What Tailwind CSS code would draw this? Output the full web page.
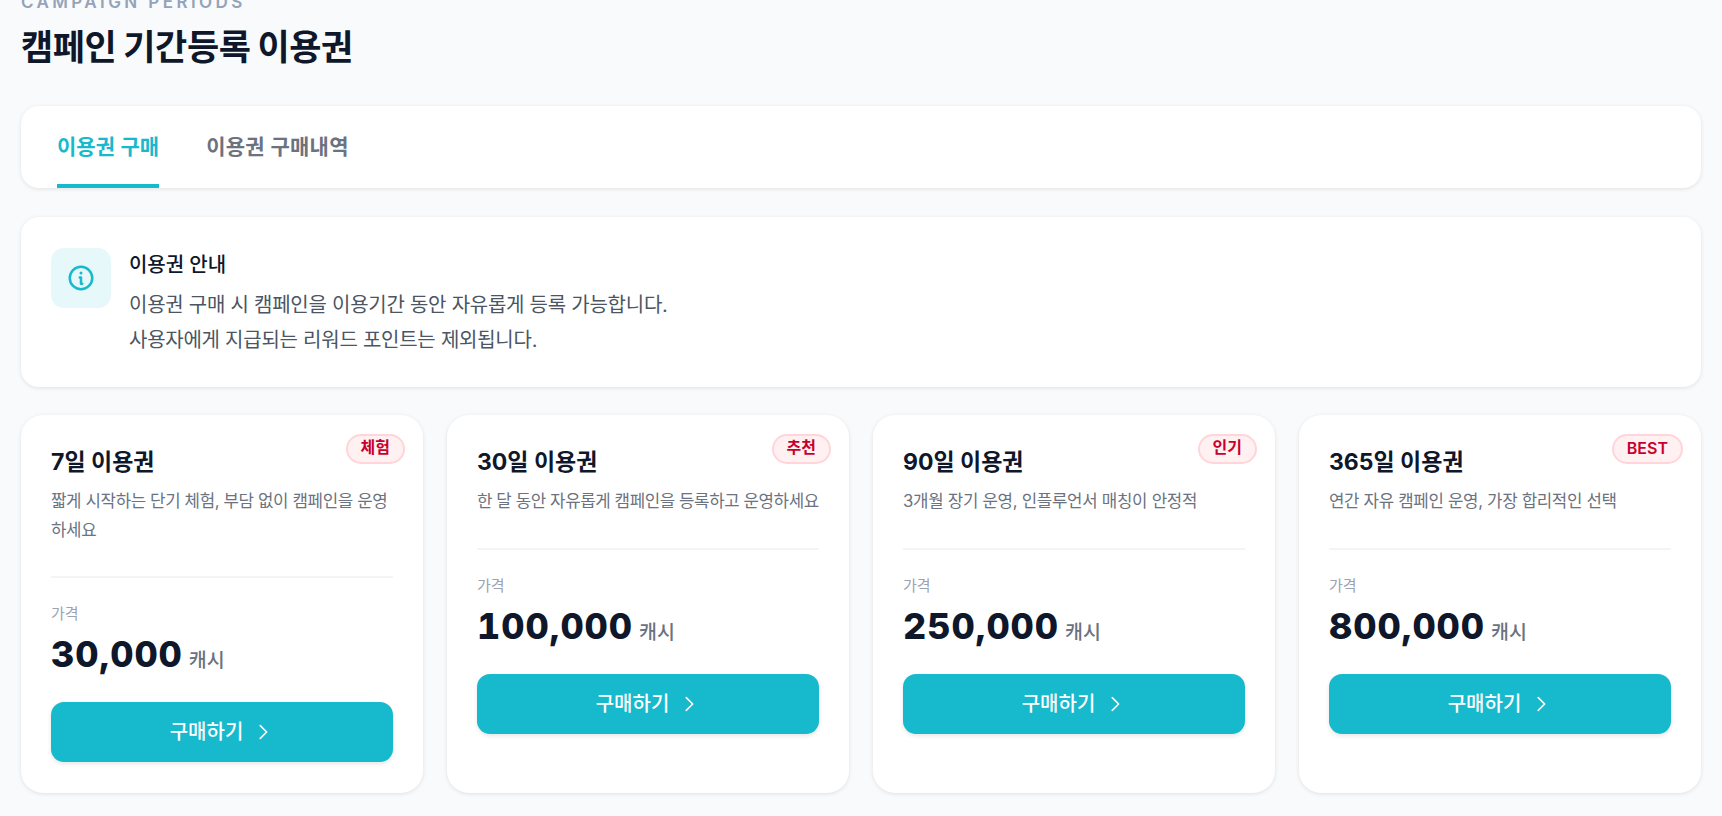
<!DOCTYPE html>
<html lang="ko">
<head>
<meta charset="utf-8">
<script src="https://cdn.jsdelivr.net/npm/@tailwindcss/browser@4"></script>
</head>
<body class="m-0 h-[816px] overflow-hidden bg-[#f9fafc] font-['Inter','Noto_Sans_CJK_KR',sans-serif] text-[#0f172a]">
<main class="flex flex-col px-[21px] -mt-[8px]">
  <header class="flex flex-col">
    <p class="text-[17px] leading-[20px] font-semibold tracking-[3.4px] text-[#94a3b8]">CAMPAIGN PERIODS</p>
    <h1 class="mt-[11px] text-[35px] leading-[48px] font-bold tracking-[-0.4px] [word-spacing:-1px] text-[#0f172a]">캠페인 기간등록 이용권</h1>
  </header>
  <nav class="mt-[35px] flex h-[82px] gap-[47px] rounded-[18px] bg-white px-[36px] shadow-[0_1px_4px_rgba(0,0,0,0.1)]">
    <a class="flex h-full items-center border-b-4 border-[#17b9cd] pt-[3px] text-[21px] font-semibold tracking-[0.05px] text-[#17b9cd]">이용권 구매</a>
    <a class="flex h-full items-center pb-[1px] text-[21px] font-semibold tracking-[0.25px] text-[#6b7280]">이용권 구매내역</a>
  </nav>
  <section class="mt-[29px] flex h-[170px] gap-[18px] rounded-[18px] bg-white px-[30px] pt-[31px] shadow-[0_1px_4px_rgba(0,0,0,0.1)]">
    <div class="flex h-[60px] w-[60px] shrink-0 items-center justify-center rounded-[13px] bg-[#e6f8fa]">
      <svg class="h-[30px] w-[30px]" viewBox="0 0 24 24" fill="none" stroke="#17b9cd" stroke-width="2" stroke-linecap="round" stroke-linejoin="round"><circle cx="12" cy="12" r="9"/><path d="M11 11.5h1v5h1"/><path d="M12 8h.01" stroke-width="2.4"/></svg>
    </div>
    <div class="flex flex-col">
      <h2 class="text-[20px] leading-[35px] font-medium tracking-[-0.05px] text-[#0f172a]">이용권 안내</h2>
      <p class="mt-[5px] text-[20px] leading-[35px] tracking-[-0.25px] text-[#4b5563]">이용권 구매 시 캠페인을 이용기간 동안 자유롭게 등록 가능합니다.<br>사용자에게 지급되는 리워드 포인트는 제외됩니다.</p>
    </div>
  </section>
  <section class="mt-[28px] grid h-[378px] grid-cols-4 gap-[24px]">
    <article class="relative flex flex-col rounded-[22px] bg-white p-[30px] shadow-[0_1px_4px_rgba(0,0,0,0.1)]">
      <span class="absolute right-[18px] top-[19px] flex h-[30px] items-center rounded-full border-2 border-[#ffd5da] bg-[#fff0f1] px-[13px] pb-[4px] text-[16px] font-semibold text-[#c8002f]">체험</span>
      <h3 class="mt-[1px] text-[23px] leading-[32px] font-bold">7일 이용권</h3>
      <p class="mt-[9px] text-[16.8px] leading-[28.56px] tracking-[-0.37px] text-[#6b7280]">짧게 시작하는 단기 체험, 부담 없이 캠페인을 운영하세요</p>
      <div class="mt-[32px] border-t-2 border-[#f3f4f6] pt-[25px]">
        <p class="text-[15px] leading-[22px] text-[#9ca3af]">가격</p>
        <p class="mt-[5px] flex items-baseline gap-[6px] leading-[48px]"><span class="text-[36px] font-extrabold tracking-[1px] tabular-nums text-[#0f172a]">30,000</span><span class="text-[19.5px] font-medium text-[#6b7280]">캐시</span></p>
      </div>
      <button class="mt-[18px] flex h-[60px] w-full items-center justify-center gap-[9px] rounded-[13px] bg-[#17b9cd] text-[20px] font-medium text-white shadow-[0_2px_4px_rgba(0,0,0,0.1)]">구매하기<svg class="h-[22px] w-[22px]" viewBox="0 0 24 24" fill="none" stroke="white" stroke-width="1.75" stroke-linecap="round" stroke-linejoin="round"><path d="m9 5 7 7-7 7"/></svg></button>
    </article>
    <article class="relative flex flex-col rounded-[22px] bg-white p-[30px] shadow-[0_1px_4px_rgba(0,0,0,0.1)]">
      <span class="absolute right-[18px] top-[19px] flex h-[30px] items-center rounded-full border-2 border-[#ffd5da] bg-[#fff0f1] px-[13px] pb-[4px] text-[16px] font-semibold text-[#c8002f]">추천</span>
      <h3 class="mt-[1px] text-[23px] leading-[32px] font-bold">30일 이용권</h3>
      <p class="mt-[9px] whitespace-nowrap text-[16.8px] leading-[28.56px] tracking-[-0.4px] text-[#6b7280]">한 달 동안 자유롭게 캠페인을 등록하고 운영하세요</p>
      <div class="mt-[32px] border-t-2 border-[#f3f4f6] pt-[25px]">
        <p class="text-[15px] leading-[22px] text-[#9ca3af]">가격</p>
        <p class="mt-[5px] flex items-baseline gap-[6px] leading-[48px]"><span class="text-[36px] font-extrabold tracking-[1px] tabular-nums text-[#0f172a]">100,000</span><span class="text-[19.5px] font-medium text-[#6b7280]">캐시</span></p>
      </div>
      <button class="mt-[18px] flex h-[60px] w-full items-center justify-center gap-[9px] rounded-[13px] bg-[#17b9cd] text-[20px] font-medium text-white shadow-[0_2px_4px_rgba(0,0,0,0.1)]">구매하기<svg class="h-[22px] w-[22px]" viewBox="0 0 24 24" fill="none" stroke="white" stroke-width="1.75" stroke-linecap="round" stroke-linejoin="round"><path d="m9 5 7 7-7 7"/></svg></button>
    </article>
    <article class="relative flex flex-col rounded-[22px] bg-white p-[30px] shadow-[0_1px_4px_rgba(0,0,0,0.1)]">
      <span class="absolute right-[18px] top-[19px] flex h-[30px] items-center rounded-full border-2 border-[#ffd5da] bg-[#fff0f1] px-[13px] pb-[4px] text-[16px] font-semibold text-[#c8002f]">인기</span>
      <h3 class="mt-[1px] text-[23px] leading-[32px] font-bold">90일 이용권</h3>
      <p class="mt-[9px] text-[16.8px] leading-[28.56px] tracking-[-0.3px] text-[#6b7280]">3개월 장기 운영, 인플루언서 매칭이 안정적</p>
      <div class="mt-[32px] border-t-2 border-[#f3f4f6] pt-[25px]">
        <p class="text-[15px] leading-[22px] text-[#9ca3af]">가격</p>
        <p class="mt-[5px] flex items-baseline gap-[6px] leading-[48px]"><span class="text-[36px] font-extrabold tracking-[1px] tabular-nums text-[#0f172a]">250,000</span><span class="text-[19.5px] font-medium text-[#6b7280]">캐시</span></p>
      </div>
      <button class="mt-[18px] flex h-[60px] w-full items-center justify-center gap-[9px] rounded-[13px] bg-[#17b9cd] text-[20px] font-medium text-white shadow-[0_2px_4px_rgba(0,0,0,0.1)]">구매하기<svg class="h-[22px] w-[22px]" viewBox="0 0 24 24" fill="none" stroke="white" stroke-width="1.75" stroke-linecap="round" stroke-linejoin="round"><path d="m9 5 7 7-7 7"/></svg></button>
    </article>
    <article class="relative flex flex-col rounded-[22px] bg-white p-[30px] shadow-[0_1px_4px_rgba(0,0,0,0.1)]">
      <span class="absolute right-[18px] top-[19px] flex h-[30px] items-center rounded-full border-2 border-[#ffd5da] bg-[#fff0f1] px-[13px] pb-[2px] text-[16px] font-semibold text-[#c8002f]">BEST</span>
      <h3 class="mt-[1px] text-[23px] leading-[32px] font-bold">365일 이용권</h3>
      <p class="mt-[9px] text-[16.8px] leading-[28.56px] tracking-[-0.33px] text-[#6b7280]">연간 자유 캠페인 운영, 가장 합리적인 선택</p>
      <div class="mt-[32px] border-t-2 border-[#f3f4f6] pt-[25px]">
        <p class="text-[15px] leading-[22px] text-[#9ca3af]">가격</p>
        <p class="mt-[5px] flex items-baseline gap-[6px] leading-[48px]"><span class="text-[36px] font-extrabold tracking-[1px] tabular-nums text-[#0f172a]">800,000</span><span class="text-[19.5px] font-medium text-[#6b7280]">캐시</span></p>
      </div>
      <button class="mt-[18px] flex h-[60px] w-full items-center justify-center gap-[9px] rounded-[13px] bg-[#17b9cd] text-[20px] font-medium text-white shadow-[0_2px_4px_rgba(0,0,0,0.1)]">구매하기<svg class="h-[22px] w-[22px]" viewBox="0 0 24 24" fill="none" stroke="white" stroke-width="1.75" stroke-linecap="round" stroke-linejoin="round"><path d="m9 5 7 7-7 7"/></svg></button>
    </article>
  </section>
</main>
</body>
</html>
